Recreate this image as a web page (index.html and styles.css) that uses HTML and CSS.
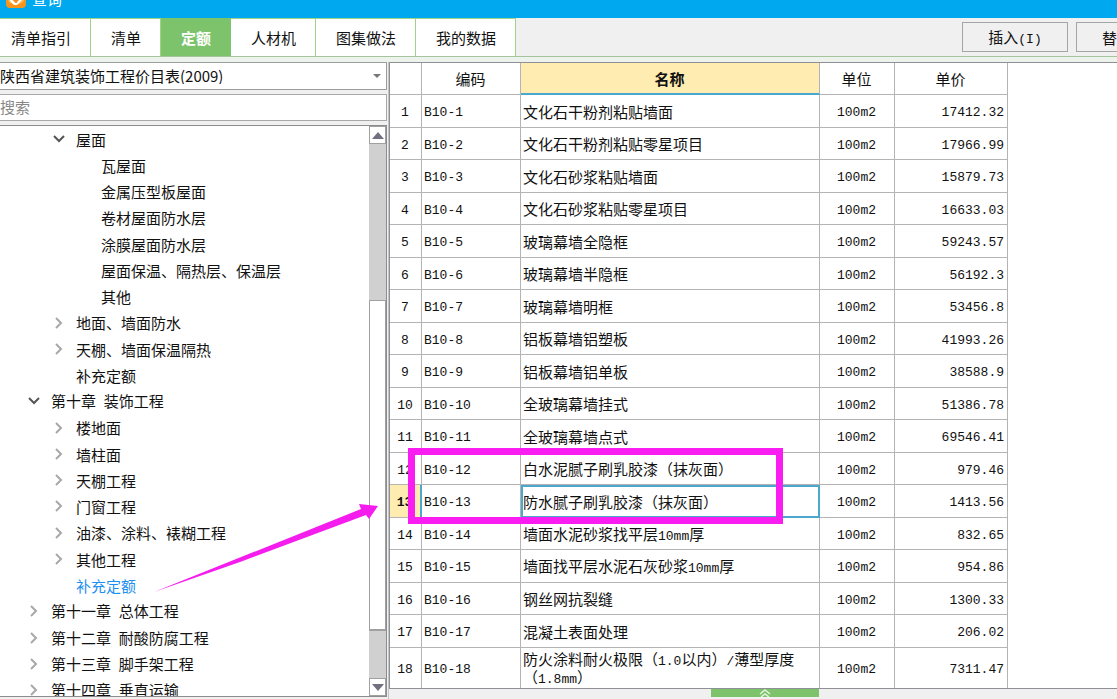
FILE: index.html
```html
<!DOCTYPE html>
<html lang="zh-CN">
<head>
<meta charset="utf-8">
<title>查询</title>
<link rel="stylesheet" href="styles.css">
</head>
<body>
<div class="window">
  <header class="titlebar">
    <svg class="logo" width="20" height="20" viewBox="0 0 20 20" aria-hidden="true"><rect width="20" height="20" rx="4" fill="#f7941d"/><rect x="2" y="1" width="16" height="15" rx="5" fill="#fbb850"/><path d="M4 5h12v7l-5 5H8l-4-4z" fill="#fff"/><path d="M7 11l3 3 5-6" fill="none" stroke="#f28a1c" stroke-width="2"/></svg>
    <span class="title">查询</span>
  </header>
  <div class="toolbar">
    <nav class="tabs">
      <button class="tab">清单指引</button><button class="tab">清单</button><button class="tab active">定额</button><button class="tab">人材机</button><button class="tab">图集做法</button><button class="tab">我的数据</button>
    </nav>
    <div class="actions">
      <button class="action">插入<span class="num">(I)</span></button>
      <button class="action cut">替</button>
    </div>
  </div>
  <main class="content">
    <aside class="side">
      <div class="combo">
        <select aria-label="定额库"><option>陕西省建筑装饰工程价目表(2009)</option></select>
        <svg class="caret" width="8" height="4" viewBox="0 0 8 4" aria-hidden="true"><path d="M0 0h8L4 4z" fill="#777"/></svg>
      </div>
      <input class="search" type="text" placeholder="搜索" aria-label="搜索">
      <div class="tree-box">
        <ul class="tree" id="tree"></ul>
        <div class="scrollbar">
          <button class="scroll-btn" aria-label="向上"><svg width="12" height="7" viewBox="0 0 12 7"><path d="M6 0l6 7H0z" fill="#707080"/></svg></button>
          <div class="track"><div class="thumb"></div></div>
          <button class="scroll-btn" aria-label="向下"><svg width="12" height="7" viewBox="0 0 12 7"><path d="M6 7l6-7H0z" fill="#707080"/></svg></button>
        </div>
      </div>
    </aside>
    <section class="main">
      <div class="grid-box">
        <table class="grid">
          <colgroup><col class="c-idx"><col class="c-code"><col class="c-name"><col class="c-unit"><col class="c-price"></colgroup>
          <thead><tr><th></th><th>编码</th><th class="sorted">名称</th><th>单位</th><th>单价</th></tr></thead>
          <tbody id="rows"></tbody>
        </table>
      </div>
      <div class="footer"><button class="expander" aria-label="展开"><svg width="14" height="8" viewBox="0 0 14 8"><path d="M2 5l5-4 5 4M3 8l4-3 4 3" fill="none" stroke="#e4f5dc" stroke-width="1.5"/></svg></button></div>
    </section>
  </main>
  <svg class="annotation" width="800" height="620" viewBox="0 0 800 620" aria-hidden="true">
    <rect x="411.500" y="451.500" width="368" height="69" fill="none" stroke="#fa1df2" stroke-width="7"/>
    <path d="M154 592L361 509L359 504L378 506L369 519L366 515L240 562Z" fill="#f51dee"/>
  </svg>
</div>
<script src="app.js"></script>
</body>
</html>
```
FILE: styles.css
```css
* { box-sizing: border-box; }
body {
  margin: 0;
  font-family: "Noto Sans CJK SC", sans-serif;
  font-size: 15px;
  line-height: 17px;
  color: #111;
}
button, select, input { font: inherit; color: inherit; margin: 0; border-radius: 0; }
.num { font-family: "Liberation Mono", monospace; font-size: 13px; white-space: pre; }
span.num { line-height: 1; }
.window { position: relative; display: flex; flex-direction: column; height: 100vh; overflow: hidden; background: #f0f0f0; }
.titlebar { flex: none; display: flex; align-items: flex-end; gap: 6px; height: 18px; padding: 0 6px 10px; background: #00a8f0; color: #fff; overflow: hidden; }
.logo { flex: none; }
.title { line-height: 18px; }
.toolbar { flex: none; display: flex; justify-content: space-between; height: 39px; border-bottom: 1px solid #a4c49c; }
.tabs { display: flex; }
.tab { padding: 0 19px 0 20px; border: 0; border-right: 1px solid #9ed48a; border-top: 1px solid #9ed48a; background: #fff; white-space: nowrap; }
.tab:first-child { padding-left: 11px; }
.tab:nth-child(n+4) { padding-left: 20px; }
.tab.active { background: #7dc36b; border-color: #7dc36b; color: #fff; font-weight: bold; }
.actions { display: flex; gap: 8px; padding: 4px 0; }
.action { width: 106px; padding: 0; border: 1px solid #a5a5a5; background: #f0f0f0; }
.action.cut { width: 41px; padding-left: 25px; border-right: 0; text-align: left; overflow: hidden; }
.content { flex: 1; min-height: 0; display: flex; padding-top: 5px; background: #edf3ec; }
.side { flex: none; width: 389px; display: flex; flex-direction: column; gap: 4px; padding-right: 1px; padding-bottom: 2px; background: #f0f0f0; border-right: 1px solid #c4c4c8; }
.combo { position: relative; flex: none; height: 28px; }
.combo select { width: 100%; height: 100%; padding: 0 0 2px; border: 1px solid #9c9c9c; border-left: 0; background: #fff; appearance: none; }
.caret { position: absolute; right: 6px; top: 12px; }
.search { flex: none; height: 27px; padding: 0 0 2px; border: 1px solid #a8a8a8; border-left: 0; background: #fff; }
.search::placeholder { color: #888; opacity: 1; }
.tree-box { flex: 1; min-height: 0; display: flex; border: 1px solid #8c8c90; border-left: 0; background: #fff; }
.tree { flex: 1; margin: 0; padding: 0; list-style: none; overflow: hidden; }
.tree li { display: flex; align-items: center; height: 26px; white-space: nowrap; }
.tree li:nth-child(4n) { height: 27px; }
.toggle { display: flex; align-items: center; justify-content: center; width: 22px; height: 20px; padding: 0; border: 0; background: none; margin-right: 6px; }
.leaf { width: 28px; }
.lv1 { padding-left: 23px; }
.lv2 { padding-left: 48px; }
.lv3 { padding-left: 73px; }
.tree .selected { color: #1e90f0; }
.scrollbar { flex: none; width: 17px; display: flex; flex-direction: column; background: #d0d0d0; }
.scroll-btn { flex: none; display: flex; align-items: center; justify-content: center; height: 18px; padding: 0; border: 1px solid #a0a0a0; background: #fff; }
.track { flex: 1; display: flex; flex-direction: column; padding-top: 156px; padding-bottom: 47px; }
.thumb { flex: 1; border: 1px solid #a0a0a0; border-bottom-width: 2px; background: #fff; }
.main { flex: 1; min-width: 0; display: flex; flex-direction: column; background: #f0f0f0; }
.grid-box { flex: 1; min-height: 0; border: 1px solid #8f8f96; border-right: 0; background: #fff; overflow: hidden; }
.grid { width: 618px; table-layout: fixed; border-collapse: separate; border-spacing: 0; }
.c-idx { width: 32px; }
.c-code { width: 99px; }
.c-name { width: 299px; }
.c-unit { width: 75px; }
.c-price { width: 113px; }
.grid th, .grid td { padding: 0 3px 0 2px; border-right: 1px solid #b4b4b4; border-bottom: 1px solid #b4b4b4; }
.grid th { height: 32px; font-weight: normal; }
.grid th.sorted { background: #ffecb0; border-bottom: 2px solid #4ba7cc; font-weight: bold; }
.grid td { height: 33px; }
.grid td.num { padding-top: 3px; }
.grid tr:nth-child(even) td { height: 32px; }
.grid tr:last-child td { height: 41px; }
.grid .idx, .grid .unit { text-align: center; }
.grid .price { text-align: right; }
.grid .current .idx { background: #ffecb0; border-right: 2px solid #4ba7cc; font-weight: bold; }
.grid .current .name { padding: 0 1px 0 0; border: 2px solid #4ba7cc; }
.footer { flex: none; height: 10px; padding-left: 322px; display: flex; align-items: flex-start; }
.expander { display: flex; justify-content: center; width: 108px; height: 8px; padding: 0; border: 0; background: #7dc36b; }
.annotation { position: absolute; left: 0; top: 0; pointer-events: none; }
```
FILE: app.js
```js
const latin = s => s.replace(/[A-Za-z0-9.\/\- ]+/g, m => `<span class="num">${m}</span>`);

// [level, state, label]; state: open, closed or leaf
const nodes = [
  [2, "open", "屋面"], [3, "leaf", "瓦屋面"], [3, "leaf", "金属压型板屋面"],
  [3, "leaf", "卷材屋面防水层"], [3, "leaf", "涂膜屋面防水层"],
  [3, "leaf", "屋面保温、隔热层、保温层"], [3, "leaf", "其他"],
  [2, "closed", "地面、墙面防水"], [2, "closed", "天棚、墙面保温隔热"],
  [2, "leaf", "补充定额"], [1, "open", "第十章 装饰工程"],
  [2, "closed", "楼地面"], [2, "closed", "墙柱面"], [2, "closed", "天棚工程"],
  [2, "closed", "门窗工程"], [2, "closed", "油漆、涂料、裱糊工程"],
  [2, "closed", "其他工程"], [2, "leaf", "补充定额", "selected"],
  [1, "closed", "第十一章 总体工程"], [1, "closed", "第十二章 耐酸防腐工程"],
  [1, "closed", "第十三章 脚手架工程"], [1, "closed", "第十四章 垂直运输"]
];
const icons = {
  open: '<svg width="12" height="8" viewBox="0 0 12 8"><path d="M1 1l5 5 5-5" fill="none" stroke="#555" stroke-width="2"/></svg>',
  closed: '<svg width="8" height="12" viewBox="0 0 8 12"><path d="M1 1l5 5-5 5" fill="none" stroke="#a8a8a8" stroke-width="2"/></svg>'
};
document.getElementById("tree").innerHTML = nodes.map(([lv, state, label, cls]) => {
  const lead = state === "leaf"
    ? '<span class="leaf"></span>'
    : `<button class="toggle" aria-label="${label}">${icons[state]}</button>`;
  return `<li class="lv${lv} ${cls || ""}">${lead}<span>${latin(label)}</span></li>`;
}).join("");

const items = [
  ["文化石干粉剂粘贴墙面", "17412.32"], ["文化石干粉剂粘贴零星项目", "17966.99"],
  ["文化石砂浆粘贴墙面", "15879.73"], ["文化石砂浆粘贴零星项目", "16633.03"],
  ["玻璃幕墙全隐框", "59243.57"], ["玻璃幕墙半隐框", "56192.3"],
  ["玻璃幕墙明框", "53456.8"], ["铝板幕墙铝塑板", "41993.26"],
  ["铝板幕墙铝单板", "38588.9"], ["全玻璃幕墙挂式", "51386.78"],
  ["全玻璃幕墙点式", "69546.41"], ["白水泥腻子刷乳胶漆（抹灰面）", "979.46"],
  ["防水腻子刷乳胶漆（抹灰面）", "1413.56"], ["墙面水泥砂浆找平层10mm厚", "832.65"],
  ["墙面找平层水泥石灰砂浆10mm厚", "954.86"], ["钢丝网抗裂缝", "1300.33"],
  ["混凝土表面处理", "206.02"], ["防火涂料耐火极限（1.0以内）/薄型厚度（1.8mm）", "7311.47"]
];
document.getElementById("rows").innerHTML = items.map(([name, price], i) =>
  `<tr class="${i === 12 ? "current" : ""}"><td class="idx num">${i + 1}</td><td class="num">B10-${i + 1}</td><td class="name">${latin(name)}</td><td class="unit num">100m2</td><td class="price num">${price}</td></tr>`
).join("");
```
